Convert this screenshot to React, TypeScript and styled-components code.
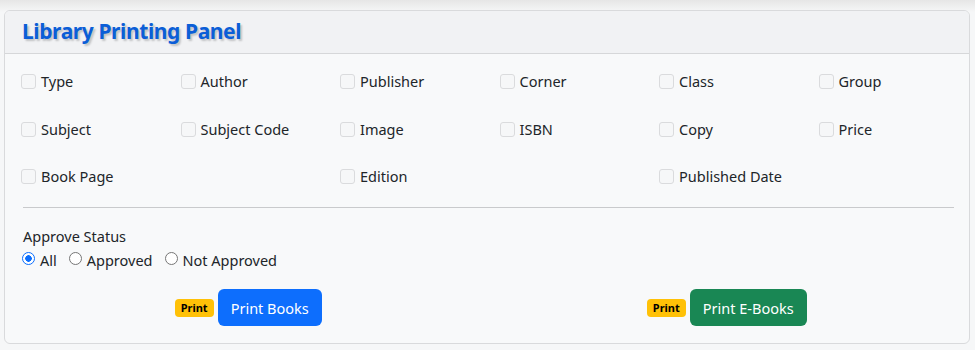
import styled, { createGlobalStyle } from 'styled-components';

const GlobalStyle = createGlobalStyle`
  body {
    margin: 0;
    background: linear-gradient(#e6e6e6, #f6f7f8 12px);
    font-family: "Noto Sans", "DejaVu Sans", sans-serif;
    color: #212529;
  }
`;

const Page = styled.div`
  padding: 10px 5px 6px 4px;
`;

const Card = styled.div`
  background: #f8f9fa;
  border: 1px solid #d9dadc;
  border-radius: 6px;
  overflow: hidden;
`;

const CardHeader = styled.div`
  background: #f1f2f4;
  border-bottom: 1px solid #d6d7d9;
  height: 42px;
  display: flex;
  align-items: center;
  padding: 0 17px;
`;

const Title = styled.h1`
  margin: -2px 0 0;
  font-size: 21px;
  font-weight: 700;
  color: #0b5ed7;
  letter-spacing: -0.4px;
  text-shadow: 2px 2px 2px rgba(0, 0, 0, 0.2);
`;

const CardBody = styled.div`
  padding: 16px 15px 17px 16px;
`;

const Grid = styled.div`
  display: grid;
  grid-template-columns: repeat(6, 1fr);
  row-gap: 24.5px;
  margin: 0 -12px 0 -12px;
  width: calc(100% + 24px);
`;

const Cell = styled.label`
  display: flex;
  align-items: center;
  gap: 5px;
  padding: 0 12px 0 12px;
  font-size: 14.5px;
  line-height: 23px;
`;

const Box = styled.span`
  width: 15px;
  height: 15px;
  border: 1px solid #dadbdd;
  border-radius: 3px;
  background: #f6f7f8;
  box-sizing: border-box;
  flex-shrink: 0;
`;

const Divider = styled.hr`
  border: none;
  border-top: 1px solid #c9cacc;
  margin: 19px 0 0 2px;
`;

const StatusBlock = styled.div`
  margin: 18px 0 0 2px;
`;

const StatusLabel = styled.div`
  font-size: 14.5px;
  line-height: 20px;
`;

const RadioRow = styled.div`
  display: flex;
  align-items: center;
  gap: 12px;
  font-size: 14.5px;
  line-height: 28px;
  margin-left: -1px;
`;

const RadioItem = styled.label`
  display: flex;
  align-items: center;
  gap: 5px;
`;

const Radio = styled.span<{ checked?: boolean }>`
  width: 13px;
  height: 13px;
  border-radius: 50%;
  box-sizing: border-box;
  border: 1px solid ${({ checked }) => (checked ? '#0b6efd' : '#767676')};
  background: ${({ checked }) =>
    checked ? 'radial-gradient(circle, #0b6efd 0 3px, #fff 3.5px)' : '#fff'};
  margin-top: -4px;
`;

const Actions = styled.div`
  display: grid;
  grid-template-columns: 1fr 1fr;
  column-gap: 24px;
  margin-top: 15px;
`;

const ActionCell = styled.div`
  display: flex;
  justify-content: center;
  align-items: center;
  gap: 4px;
`;

const Badge = styled.span`
  background: #ffc107;
  color: #000;
  font-size: 11px;
  font-weight: 700;
  padding: 0 6px;
  height: 18px;
  line-height: 18px;
  border-radius: 4px;
`;

const Button = styled.button<{ tone: 'blue' | 'green' }>`
  background: ${({ tone }) => (tone === 'blue' ? '#0d6efd' : '#198754')};
  color: #fff;
  border: none;
  border-radius: 6px;
  font-family: inherit;
  font-size: 14.5px;
  height: 37px;
  padding: 0 13px;
`;

const fields = [
  'Type', 'Author', 'Publisher', 'Corner', 'Class', 'Group',
  'Subject', 'Subject Code', 'Image', 'ISBN', 'Copy', 'Price',
  'Book Page', '', 'Edition', '', 'Published Date', '',
];

export default function App() {
  return (
    <Page>
      <GlobalStyle />
      <Card>
        <CardHeader>
          <Title>Library Printing Panel</Title>
        </CardHeader>
        <CardBody>
          <Grid>
            {fields.map((f, i) => (
              <Cell key={i}>
                {f && <Box />}
                {f}
              </Cell>
            ))}
          </Grid>
          <Divider />
          <StatusBlock>
            <StatusLabel>Approve Status</StatusLabel>
            <RadioRow>
              <RadioItem><Radio checked />All</RadioItem>
              <RadioItem><Radio />Approved</RadioItem>
              <RadioItem><Radio />Not Approved</RadioItem>
            </RadioRow>
          </StatusBlock>
          <Actions>
            <ActionCell>
              <Badge>Print</Badge>
              <Button tone="blue">Print Books</Button>
            </ActionCell>
            <ActionCell>
              <Badge>Print</Badge>
              <Button tone="green">Print E-Books</Button>
            </ActionCell>
          </Actions>
        </CardBody>
      </Card>
    </Page>
  );
}
